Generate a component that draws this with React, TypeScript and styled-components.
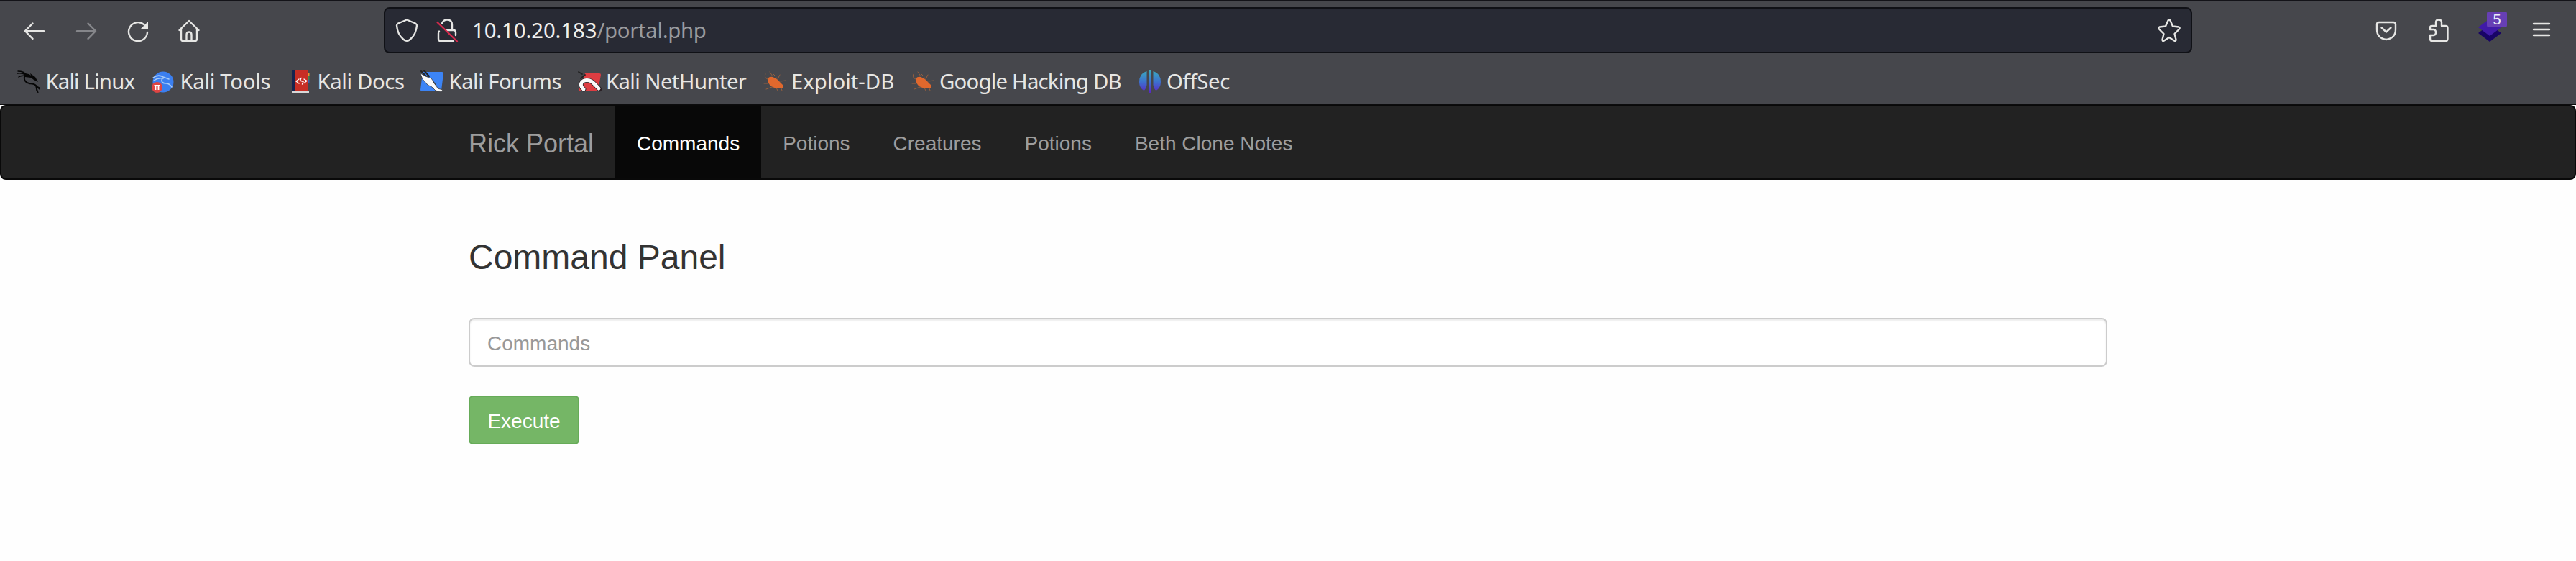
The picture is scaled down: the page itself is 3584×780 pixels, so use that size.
import React from 'react';
import styled, { createGlobalStyle } from 'styled-components';

const GlobalStyle = createGlobalStyle`
  * { box-sizing: border-box; }
  html, body { margin: 0; padding: 0; background: #fefefe; }
  #root { font-family: "Liberation Sans", Arial, sans-serif; }
`;

const Page = styled.div`
  width: 3584px;
  height: 780px;
  overflow: hidden;
  background: #fefefe;
`;

const Chrome = styled.header`
  height: 146px;
  border-top: 2px solid #131318;
  border-bottom: 2px solid #0c0c0d;
  background: #46474c;
  color: #e6e6e4;
  font-family: "Noto Sans", sans-serif;
  font-size: 29.33px;
`;

const Toolbar = styled.div`
  display: flex;
  align-items: center;
  height: 80px;
  padding: 0 32px;
`;

const NavIcons = styled.div`
  display: flex;
  gap: 40px;
  width: 502px;
`;

const Icon = styled.svg<{ $dim?: boolean; $color?: string }>`
  display: block;
  flex: none;
  width: 32px;
  height: 32px;
  overflow: visible;
  fill: none;
  stroke: ${(p) => p.$color ?? (p.$dim ? '#85868a' : '#e6e6e4')};
  stroke-width: 2.4;
  stroke-linecap: round;
  stroke-linejoin: round;
`;

const AddressBar = styled.div`
  display: flex;
  align-items: center;
  flex: none;
  width: 2516px;
  height: 64px;
  padding: 0 14px;
  border: 2px solid #101116;
  border-radius: 8px;
  background: #282a34;
`;

const Lock = styled.div`
  margin: 0 19px 0 24px;
`;

const Address = styled.div`
  flex: 1;
  color: #9a9b9e;
  line-height: 40px;
  letter-spacing: -0.3px;
`;

const Host = styled.span`
  color: #f0f0ee;
  letter-spacing: -0.1px;
`;

const Actions = styled.div`
  display: flex;
  align-items: center;
  gap: 40px;
  margin-left: auto;
`;

const Extension = styled.div`
  position: relative;
`;

const Badge = styled.span`
  position: absolute;
  top: -10px;
  left: 12px;
  width: 28px;
  height: 22px;
  border-radius: 3px;
  background: #673fb4;
  color: #f0eef8;
  font-family: "Liberation Sans", Arial, sans-serif;
  font-size: 20px;
  line-height: 23px;
  text-align: center;
`;

const Bookmarks = styled.nav`
  display: flex;
  align-items: center;
  height: 60px;
  padding: 4px 0 0 24px;
`;

const Bookmark = styled.div<{ $width: number }>`
  display: flex;
  align-items: center;
  gap: 7.5px;
  width: ${(p) => p.$width}px;
  line-height: 40px;
  white-space: nowrap;
`;

const BookmarkLabel = styled.span<{ $tracking: number }>`
  padding-bottom: 2px;
  letter-spacing: ${(p) => p.$tracking}px;
`;

const Navbar = styled.nav`
  height: 104px;
  border: 2px solid #090909;
  border-radius: 8px;
  background: #222;
`;

const NavInner = styled.div`
  display: flex;
  width: 2340px;
  height: 100px;
  margin: 0 auto;
  color: #9d9d9d;
  font-size: 28px;
  line-height: 98px;
`;

const Brand = styled.div`
  width: 234px;
  padding: 3px 0 0 30px;
  font-size: 36px;
`;

const NavItem = styled.div<{ $active?: boolean }>`
  height: 100px;
  padding: 3px 30px 0;
  background: ${(p) => (p.$active ? '#080808' : 'transparent')};
  color: ${(p) => (p.$active ? '#fff' : 'inherit')};
`;

const Content = styled.main`
  width: 2280px;
  margin: 0 auto;
  padding-top: 81px;
`;

const Title = styled.h3`
  margin: 0;
  height: 111px;
  color: #333;
  font-size: 48px;
  font-weight: 400;
  line-height: 53px;
`;

const CommandInput = styled.input`
  display: block;
  width: 100%;
  height: 68px;
  padding: 4px 24px 0;
  border: 2px solid #ccc;
  border-radius: 8px;
  outline: 0;
  background: #fff;
  box-shadow: inset 0 2px 2px rgba(0, 0, 0, 0.075);
  font: 28px "Liberation Sans", Arial, sans-serif;
  &::placeholder { color: #999; opacity: 1; }
`;

const ExecuteButton = styled.button`
  display: block;
  width: 154px;
  height: 68px;
  margin-top: 40px;
  padding: 3px 0 0;
  border: 2px solid #66ab58;
  border-radius: 6px;
  background: #75b666;
  color: #fff;
  font: 28px "Liberation Sans", Arial, sans-serif;
`;

const DragonIcon = () => (
  <Icon viewBox="0 0 32 32" $color="#060606">
    <path d="M1 1c5 0 9 1 12 5M0 4c5-1 8 0 12 2M2 9c3-2 6-2 10-2" strokeWidth="1.4" />
    <path d="M11 6c-3 6 0 11 6 12 6 1 9 1 10 5" strokeWidth="2" />
    <path d="M25 21l6 3M26 22l5 4M26 22l3 9M26 22l1 6" strokeWidth="1.3" />
    <path d="M10 5c4-1 7 0 9 2l-1-3 7 5 4 7-6-3-4-3-8-1z" fill="#060606" stroke="none" />
  </Icon>
);

const ToolsIcon = () => (
  <Icon viewBox="0 0 32 32">
    <circle cx="16" cy="16" r="14.5" fill="#3b7ff0" stroke="none" />
    <path d="M2 10c4-3 9-4 14-1l8 3M3 14c4-3 8-4 13-3M15 11c-3 5 1 7 5 7 4 0 6 2 8 5" stroke="#a9cbf6" strokeWidth="1.5" />
    <circle cx="7.5" cy="23.5" r="7.5" fill="#df4543" stroke="none" />
    <path d="M3.5 21h8M5.500 21v6M9.500 21v6" stroke="#fff" strokeWidth="1.8" strokeLinecap="butt" />
  </Icon>
);

const DocsIcon = () => (
  <Icon viewBox="0 0 32 32">
    <path d="M4 0h23v29H4z" fill="#c72e25" stroke="none" />
    <path d="M4 0h4v29H4z" fill="#17244f" stroke="none" />
    <path d="M26.500 3h2v5h-2z" fill="#e79a2c" stroke="none" />
    <path d="M26.500 8h2v5h-2z" fill="#3d8a55" stroke="none" />
    <path d="M26.500 13h2v4h-2z" fill="#3a5fae" stroke="none" />
    <path d="M4 29h24v3H4z" fill="#d8d8d8" stroke="none" />
    <path d="M14 12l-4 3 4 3M17 10.500l-1.500 3.500 4.500 1.500-1.500 3.500M21 12l4 2.500-4 3" stroke="#fff" strokeWidth="1.4" />
  </Icon>
);

const ForumsIcon = () => (
  <Icon viewBox="0 0 32 32">
    <path d="M3 2h27q2 0 2 2l-3 24q0 1-2 1H2q-2 0-2-2z" fill="#3c84f5" stroke="none" />
    <path d="M1 1l8 8M5 0l7 8" stroke="#222" strokeWidth="2" />
    <path d="M0 4l7 4 8 3 6 8 3 6 7 2-2 3-8-2-5-5-6-3-7-8z" fill="#fafafa" stroke="#33373d" strokeWidth="0.8" />
    <path d="M18 16l3 4" stroke="#33373d" strokeWidth="1.2" />
  </Icon>
);

const NetHunterIcon = () => (
  <Icon viewBox="0 0 32 32">
    <path d="M10 4h20q2 0 2 2l-4 22q0 1-2 1H3q-2 0-2-2z" fill="#dd3d42" stroke="none" />
    <path d="M8 26C1 20 5 14 12 13.500S22 18 30 26" stroke="#2a2024" strokeWidth="6.600" />
    <path d="M8 26C1 20 5 14 12 13.500S22 18 29 25" stroke="#fafafa" strokeWidth="5" />
    <path d="M1 2l5 3M4 11l6-5" stroke="#222" strokeWidth="1.800" />
  </Icon>
);

const BugIcon = () => (
  <Icon viewBox="0 0 32 32" $color="#95603f">
    <path d="M3 5c-2 3 0 6 3 7M9 2l4 6M14 5l4 4M20 12l3-6M24 15l7-1M24 22l2 6M1 18l6 0M4 26l8-3 5 0M18 24l2 4" strokeWidth="1" />
    <path d="M6 11q3-3 7-2 6 2 9 6l6 6-1 3-5 1q-6 0-11-3-5-4-5-11z" fill="#e0682d" stroke="none" />
  </Icon>
);

const OffSecIcon = () => (
  <Icon viewBox="0 0 32 32">
    <defs>
      <linearGradient id="offsec" x1="0" y1="0" x2="0" y2="32" gradientUnits="userSpaceOnUse">
        <stop offset="0" stopColor="#3aaabf" />
        <stop offset=".5" stopColor="#3d70cf" />
        <stop offset="1" stopColor="#5b20c5" />
      </linearGradient>
    </defs>
    <path d="M11.500 1v19q-1 6-4 8Q1 24 1 16 1 4 11.500 1zM14 0h4v32h-4zM20.500 1v19q1 6 4 8Q31 24 31 16 31 4 20.500 1z" fill="url(#offsec)" stroke="none" />
  </Icon>
);

const bookmarks = [
  { label: 'Kali Linux', icon: <DragonIcon />, width: 187, tracking: -0.85 },
  { label: 'Kali Tools', icon: <ToolsIcon />, width: 191, tracking: -0.3 },
  { label: 'Kali Docs', icon: <DocsIcon />, width: 183, tracking: -0.38 },
  { label: 'Kali Forums', icon: <ForumsIcon />, width: 218.5, tracking: -0.5 },
  { label: 'Kali NetHunter', icon: <NetHunterIcon />, width: 258, tracking: -0.62 },
  { label: 'Exploit-DB', icon: <BugIcon />, width: 206, tracking: 0 },
  { label: 'Google Hacking DB', icon: <BugIcon />, width: 316, tracking: -0.8 },
  { label: 'OffSec', icon: <OffSecIcon />, width: 160, tracking: -0.3 },
];

const links = ['Commands', 'Potions', 'Creatures', 'Potions', 'Beth Clone Notes'];

export default function App() {
  return (
    <Page>
      <GlobalStyle />
      <Chrome>
        <Toolbar>
          <NavIcons>
            <Icon viewBox="0 0 32 32"><path d="M3 17.200h26M13.500 6.500L3 17.200l10.500 10.700" /></Icon>
            <Icon viewBox="0 0 32 32" $dim><path d="M3 17.200h26M18.500 6.500L29 17.200 18.500 27.900" /></Icon>
            <Icon viewBox="0 0 32 32">
              <path d="M24.500 8.300A13 13 0 1 0 29 19" />
              <path d="M30 4v10H20z" fill="#e6e6e4" stroke="none" />
            </Icon>
            <Icon viewBox="0 0 32 32">
              <path d="M1.500 16L15 3l13.500 13M4 14V28q0 3 3 3h16q3 0 3-3V14M11.500 31V22q0-3.500 3.500-3.500t3.500 3.500v9" />
            </Icon>
          </NavIcons>
          <AddressBar>
            <Icon viewBox="0 0 32 32"><path d="M16 1.500L28 6.500q2 1 2 3-1 12-9 19-5 4.500-10 0-8-7-9-19 0-2 2-3z" /></Icon>
            <Lock>
              <Icon viewBox="0 0 32 32">
                <path d="M9 6.500q2-5 7-5 7 0 7 7V16M16 16h9q3 0 3 3v4M5 17.500q-1 1-1 3V28q0 3 3 3h18" />
                <path d="M2.500 5L30 31.500" stroke="#d5294c" />
              </Icon>
            </Lock>
            <Address><Host>10.10.20.183</Host>/portal.php</Address>
            <Icon viewBox="0 0 32 32">
              <path d="M14.500 2.500q1.500-2 3 0L21 10.500l8.500 1q2 1 .5 3l-6.500 6.500 2 8q0 3-2.500 1.500l-7-4.500-7 4.500q-2.500 1.500-2.500-1.500l2-8L2 14.500q-1.500-2 .5-3l8.500-1z" />
            </Icon>
          </AddressBar>
          <Actions>
            <Icon viewBox="0 0 32 32">
              <path d="M6 5h20q3 0 3 3v7q0 12-13 14Q3 27 3 15V8q0-3 3-3zM9.500 12.500l6.500 6 6.500-6" />
            </Icon>
            <Icon viewBox="0 0 32 32">
              <path d="M5 15V12.500q0-2.500 2.500-2.500H13V5q0-3.500 4-3.500T21 5v5h5.500q3 0 3 3v15q0 3-3 3H8q-3 0-3-3v-5h4.500q3.500 0 3.500-4t-3.500-4z" />
            </Icon>
            <Extension>
              <Icon viewBox="0 0 32 32">
                <path d="M16 8l16 12-16 12L0 20z" fill="#180466" stroke="none" />
                <path d="M16 0l16 12-16 12L0 12z" fill="#401aa8" stroke="none" />
              </Icon>
              <Badge>5</Badge>
            </Extension>
            <Icon viewBox="0 0 32 32"><path d="M5 7h22M5 15h22M5 23h22" /></Icon>
          </Actions>
        </Toolbar>
        <Bookmarks>
          {bookmarks.map((b) => (
            <Bookmark key={b.label} $width={b.width}>
              {b.icon}
              <BookmarkLabel $tracking={b.tracking}>{b.label}</BookmarkLabel>
            </Bookmark>
          ))}
        </Bookmarks>
      </Chrome>
      <Navbar>
        <NavInner>
          <Brand>Rick Portal</Brand>
          {links.map((label, i) => (
            <NavItem key={i} $active={i === 0}>{label}</NavItem>
          ))}
        </NavInner>
      </Navbar>
      <Content>
        <Title>Command Panel</Title>
        <CommandInput placeholder="Commands" />
        <ExecuteButton>Execute</ExecuteButton>
      </Content>
    </Page>
  );
}
